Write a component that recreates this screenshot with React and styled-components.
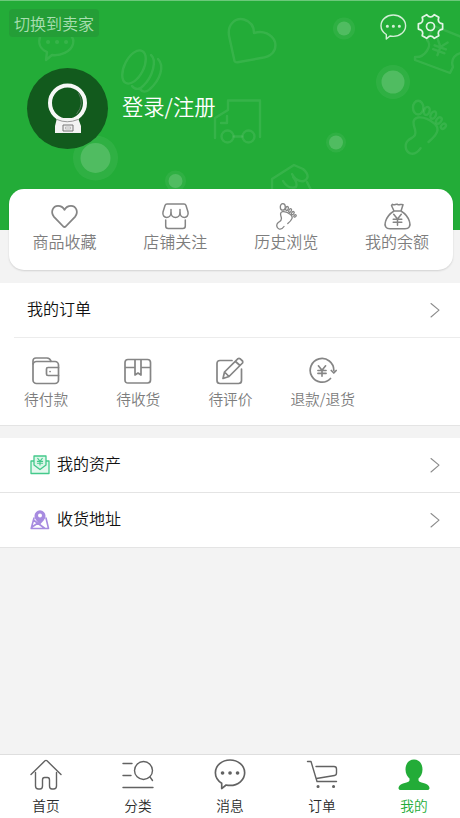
import styled, { createGlobalStyle } from "styled-components";

const GlobalStyle = createGlobalStyle`
  * {
    box-sizing: border-box;
  }

  body {
    margin: 0;
    background: #f3f3f3;
    font-family: "Noto Sans CJK SC", "Noto Sans", sans-serif;
    font-weight: 350;
  }
`;

const Page = styled.div`
  display: flex;
  flex-direction: column;
  height: 818px;
  overflow: hidden;
  background: #f3f3f3;
`;

const Header = styled.header`
  position: relative;
  flex: none;
  height: 230px;
  background: #23ac38;
  border-top: 1px solid #6cc87a;
`;

const Pattern = styled.svg`
  position: absolute;
  left: 0;
  top: -1px;
  fill: none;
  stroke: rgba(255, 255, 255, 0.09);
  stroke-width: 2.4;
  stroke-linecap: round;
  stroke-linejoin: round;
`;

const HeaderContent = styled.div`
  position: relative;
`;

const TopBar = styled.div`
  display: flex;
  justify-content: space-between;
  height: 39px;
  padding: 8px 16px 0 9px;
`;

const SwitchButton = styled.button`
  width: 90px;
  height: 28px;
  padding: 0 0 1px;
  border: 0;
  border-radius: 4px;
  background: #249e37;
  color: #a9dfb1;
  font: 350 16px/28px "Noto Sans CJK SC", sans-serif;
  text-align: center;
`;

const TopIcons = styled.div`
  display: flex;
  gap: 10px;
  padding-top: 4px;
`;

const Icon = styled.svg`
  display: block;
  flex: none;
  fill: none;
  stroke: ${(p) => p.$color || "#858585"};
  stroke-width: ${(p) => p.$line || 1.5};
  stroke-linecap: round;
  stroke-linejoin: round;
`;

const Profile = styled.div`
  display: flex;
  align-items: center;
  gap: 14px;
  padding: 28px 0 0 27px;
`;

const Avatar = styled.div`
  width: 81px;
  height: 81px;
  border-radius: 50%;
  background: #125a1d;
`;

const LoginText = styled.span`
  padding-bottom: 5px;
  color: #fff;
  font-size: 21.3px;
  line-height: 30px;
`;

const ShortcutCard = styled.section`
  position: relative;
  display: grid;
  grid-template-columns: repeat(4, 1fr);
  flex: none;
  height: 81px;
  margin: -41px 7.5px 0 9px;
  padding-top: 12px;
  border-radius: 15px;
  background: #fff;
  box-shadow: 0 1px 2px rgba(0, 0, 0, 0.14);

  svg {
    margin-bottom: -1px;
  }
`;

const Entry = styled.div`
  display: flex;
  flex-direction: column;
  align-items: center;
  color: #7d7d7d;
  font-size: ${(p) => p.$size || 16}px;
  line-height: 24px;
`;

const Panel = styled.section`
  flex: none;
  margin-top: ${(p) => p.$gap}px;
  background: #fff;
  border-bottom: 1px solid #e4e4e4;
`;

const Row = styled.div`
  display: flex;
  align-items: center;
  height: ${(p) => p.$height}px;
  padding: 0 20px 0 ${(p) => p.$left}px;
  color: #111;
  font-size: 16px;
  line-height: 24px;

  & + & {
    border-top: 1px solid #e4e4e4;
  }
`;

const RowTitle = styled.span`
  flex: 1;
  padding: 0 0 4px ${(p) => (p.$icon ? 7 : 0)}px;
`;

const Divider = styled.div`
  height: 1px;
  margin-left: 14px;
  background: #ececec;
`;

const OrderGrid = styled.div`
  display: grid;
  grid-template-columns: repeat(5, 92.2px);
  height: 87px;
  padding-top: 19px;

  svg {
    margin-bottom: -1px;
  }
`;

const TabBar = styled.nav`
  display: grid;
  grid-template-columns: repeat(5, 1fr);
  flex: none;
  height: 64px;
  margin-top: auto;
  padding-top: 3px;
  background: #fff;
  border-top: 1px solid #dedede;
`;

const TabItem = styled.div`
  display: flex;
  flex-direction: column;
  align-items: center;
  color: ${(p) => (p.$active ? "#23ac38" : "#2b2b2b")};
  font-size: 13.7px;
  line-height: 20px;

  svg {
    margin-bottom: 3px;
  }
`;

const FootShape = () => (
  <>
    <ellipse cx="7.8" cy="4.4" rx="2.5" ry="3.3" />
    <ellipse cx="12" cy="6" rx="1.3" ry="2" transform="rotate(20 12 6)" />
    <ellipse cx="15.1" cy="8" rx="1.2" ry="1.9" transform="rotate(30 15.1 8)" />
    <ellipse cx="17.8" cy="10.6" rx="1.1" ry="1.7" transform="rotate(40 17.8 10.6)" />
    <ellipse cx="20" cy="13.4" rx="1" ry="1.4" transform="rotate(45 20 13.4)" />
    <path d="M12.800 21C17 17.500 18.700 14.500 15.500 12C12.500 9.500 10 8.800 7.500 9.200C4.500 10 5.700 13 6.300 15C7.200 18.500 5 18.600 3 20.200C1 22 1.500 25.500 4 26.500C6.500 27.300 8 25.500 9 24" />
  </>
);

const StoreShape = () => (
  <>
    <path d="M5 1.500H22Q23.500 1.500 24 3L26 9.500C26.800 13 24.500 15 22.500 15C20 15 18.300 13 18 10.500C17.700 13 16 15 13.500 15C11 15 9.300 13 9 10.500C8.700 13 7 15 4.500 15C2.500 15 .2 13 1 9.500L3 3Q3.500 1.500 5 1.500Z" />
    <path d="M9 7V10.500M18 7V10.500M3.700 17.500V23.500Q3.700 26 6.200 26H20.800Q23.300 26 23.300 23.500V17.500" />
  </>
);

const Yen = ({ x, y, size = 1, line }) => (
  <path
    transform={`translate(${x} ${y}) scale(${size})`}
    strokeWidth={line}
    d="M-3.800 -5.500L0 -.8L3.800 -5.500M0 -.8V5.500M-4.300 -.5H4.300M-4.300 2.500H4.300"
  />
);

const HeaderPattern = () => (
  <Pattern width="460" height="230" viewBox="0 0 460 230">
    <path d="M47 52C40 49 38 43 40 37C44 30 52 29 58 30C68 31 75 37 73 44C71 52 60 56 52 55L46 60Z" />
    <path d="M48 42h.1M57 42h.1M66 42h.1" strokeWidth="4" />
    <ellipse cx="134" cy="67" rx="9.500" ry="18" transform="rotate(27 134 67)" />
    <path d="M151 55C157 60 153 76 144 85C140 90 135 90 132 86M158 59C165 66 160 80 150 89C146 93 142 92 140 89" />
    <path d="M234.500 61L229.500 38C226 24 236 17.500 244 19.500C252 22 254 27 254 33C263 30 272 34 275 42C277 51 271 57 261 58L239 62Q235.500 63 234.500 61Z" />
    <path d="M215 138V118L228 110V100.500H260V137M227 116V123H221" />
    <circle cx="227.500" cy="136.500" r="6" />
    <circle cx="248.500" cy="136.500" r="6" />
    <path d="M234 136.500H242" />
    <path d="M272 190V179L294 165L303 169C310 175 308 179 304 181C298 182 294 178 292 174M283 181C286 186 290 189 296 187Q298 183 293 177M307 182L311 190" />
    <path d="M434 26L427 40C433 45 425 58 415 57V60L450 73L453 67C450 59 456 53 462 53M434 26L464 38" />
    <g transform="rotate(20 440 48)">
      <Yen x="440" y="48" size="1.400" line="1.700" />
    </g>
    <g transform="translate(402 98.500) scale(2.070)" strokeWidth="1.150">
      <FootShape />
    </g>
    <g stroke="none" fill="#fff">
      {[
        [344, 28.5, 7, 11],
        [393, 82, 11.5, 17],
        [336, 142.5, 7, 10],
        [95.5, 158, 15, 22.5],
        [175.5, 181, 7, 10.5],
      ].map(([x, y, inner, outer]) => (
        <g key={x}>
          <circle cx={x} cy={y} r={outer} opacity=".06" />
          <circle cx={x} cy={y} r={inner} opacity=".16" />
        </g>
      ))}
    </g>
  </Pattern>
);

const ChatShape = () => (
  <path d="M6.300 20.500C2.800 18.300 1 15.200 1 11.700C1 5.700 6.500 1 13.300 1S25.600 5.700 25.600 11.700S20.100 22.400 13.300 22.400Q11.500 22.400 10 22L6.300 25Z" />
);

const HeaderChatIcon = () => (
  <Icon width="27" height="27" viewBox="0 -1 27 27" $color="#d3efd7" $line={1.4}>
    <ChatShape />
    <path d="M7.300 12.200h.1M13.300 12.200h.1M19.300 12.200h.1" strokeWidth="3" />
  </Icon>
);

// one tooth and the valley after it, repeated every 60 degrees
const gearPoints = [0, 60, 120, 180, 240, 300].flatMap((base) =>
  [
    [-19, 10.3],
    [-12, 12.4],
    [12, 12.4],
    [19, 10.3],
    [30, 9.5],
  ].map(([angle, radius]) => {
    const a = ((base + angle) * Math.PI) / 180;
    return `${13.5 + radius * Math.cos(a)},${13.5 + radius * Math.sin(a)}`;
  })
);

const GearIcon = () => (
  <Icon width="27" height="27" viewBox="0 0 27 27" $color="#e2f5e5" $line={1.7}>
    <polygon points={gearPoints.join(" ")} />
    <circle cx="13.500" cy="13.500" r="4" />
  </Icon>
);

const AvatarImage = () => (
  <svg width="81" height="81" viewBox="0 0 81 81">
    <circle cx="40.500" cy="35" r="17.500" fill="none" stroke="#f6f8f6" strokeWidth="4" />
    <path d="M51.500 25Q58 36 49.500 46" fill="none" stroke="#52775a" strokeWidth="1" />
    <path d="M30 50H51L54 58V65H28V58Z" fill="#f3f3f3" />
    <path d="M30 51.500Q40 56 51 51.500" fill="none" stroke="#999" strokeWidth="1" />
    <path d="M36 57H46V63H36Z" fill="#eee" stroke="#777" />
    <path d="M38.500 59H43.500V61H38.500Z" fill="none" stroke="#aaa" strokeWidth=".7" />
  </svg>
);

const shortcuts = [
  {
    label: "商品收藏",
    icon: (
      <path
        d="M12.300 24L3 14.300C-1 9.500 2 3.300 7 3.300C10.200 3.300 12.300 5 13.500 7.300C14.700 5 16.800 3.300 20 3.300C25 3.300 28 9.500 24 14.300L14.700 24Q13.500 25 12.300 24Z"
        strokeWidth="1.800"
      />
    ),
  },
  { label: "店铺关注", icon: <StoreShape /> },
  {
    label: "历史浏览",
    icon: (
      <g transform="translate(2 0)" strokeWidth="1.300">
        <FootShape />
      </g>
    ),
  },
  {
    label: "我的余额",
    icon: (
      <>
        <path d="M10 8.500L7.500 3L8.500 1.800C10.500 3.300 11.700 1 13.500 1.800C15.300 3.300 17 1 19 2.200L17 8.500C21 11 24 14 25.500 19C27 23.500 25 26.300 21 26.300H6C2 26.300 0 23.500 1.500 19C3 14 6 11 10 8.500H17" />
        <Yen x={13.5} y={17.3} size={1} />
      </>
    ),
  },
];

const orders = [
  {
    label: "待付款",
    icon: (
      <>
        <rect x="1" y="4.500" width="25.500" height="22" rx="3.500" />
        <path d="M1 7V4Q1 1 4 1H15Q18 1 19 4.300M26.500 10.500H16Q14.500 10.500 14.500 12V17Q14.500 18.500 16 18.500H26.500M18 14.500h.1" />
      </>
    ),
  },
  {
    label: "待收货",
    icon: (
      <path d="M4 2.500H23.500Q26.500 2.500 26.500 5.500V23Q26.500 26 23.500 26H4Q1 26 1 23V5.500Q1 2.500 4 2.500ZM1 10.500H11M17 10.500H26.500M11 2.500V18L14 16L17 18V2.500" />
    ),
  },
  {
    label: "待评价",
    icon: (
      <>
        <path d="M16 3.500H4Q1 3.500 1 6.500V23.500Q1 26.500 4 26.500H22.500Q25.500 26.500 25.500 23.500V12" />
        <path d="M7 21.500L8.500 15L22 1.700Q23 1 24 1.700L26.500 4Q27 5 26.500 6L13 19.500ZM19.500 4.500L24 8.500M8.500 15L13 19.500" />
      </>
    ),
  },
  {
    label: "退款/退货",
    icon: (
      <>
        <path d="M21.500 21.500A11.800 11.800 0 1 1 24.800 13.500M22.300 13.500L24.800 16L27.200 13.500" />
        <Yen x={13} y={14} size={0.95} />
      </>
    ),
  },
];

const tabs = [
  {
    label: "首页",
    icon: (
      <path d="M1 16.500L15 2.800Q16 2 17 2.800L31 16.500M5.500 14.500V28Q5.500 31 8.500 31H10Q12.500 31 12.500 28V22Q12.500 19.500 14.500 19.500H17.500Q19.500 19.500 19.500 22V28Q19.500 31 22 31H23.500Q26.500 31 26.500 28V14.500" />
    ),
  },
  {
    label: "分类",
    icon: (
      <>
        <path d="M1 5.500H10M1 17.500H9M1 29.500H31M28 19L30.500 22.500" />
        <circle cx="21.500" cy="12.500" r="9" />
      </>
    ),
  },
  {
    label: "消息",
    icon: (
      <>
        <g transform="translate(.2 .8) scale(1.190)">
          <ChatShape />
        </g>
        <path d="M8.500 15h.1M16 15h.1M23.500 15h.1" strokeWidth="3.600" />
      </>
    ),
  },
  {
    label: "订单",
    icon: (
      <>
        <path d="M1.500 3.500H5L11 23.500H30.500M10 8.500H28Q30.500 8.500 30.500 11V15Q30.500 17.200 28.500 17.500L10.500 20.500" />
        <path d="M12 28.500h.1M27.500 28.500h.1" strokeWidth="3" />
      </>
    ),
  },
  {
    label: "我的",
    active: true,
    icon: (
      <path
        fill="#23ac38"
        stroke="none"
        d="M16 1.500C21 1.500 24.500 5.500 24.500 11.500C24.500 16 22.500 18.500 20.500 20.500V22.500Q21 24 23.500 24.500L27 25.500C30.500 26.500 31.500 28.500 31.500 30.500Q31 32 29.500 32H2.500Q1 32 .5 30.500C.5 28.500 1.500 26.500 5 25.500L8.500 24.500Q11 24 11.500 22.500V20.500C9.500 18.500 7.500 16 7.500 11.500C7.500 5.500 11 1.500 16 1.500Z"
      />
    ),
  },
];

const Chevron = () => (
  <Icon width="10" height="16" viewBox="0 0 10 16" $color="#8b8b8b" $line={1.1}>
    <path d="M1 1.500L9 8.200L1 15" />
  </Icon>
);

const AssetIcon = () => (
  <Icon width="20" height="20" viewBox="0 0 20 20" $color="#43c98b" $line={1.3}>
    <path d="M4 6H1V18.500H19V6H16" fill="#e4f8ee" />
    <path d="M4 1H16V10L10 14.500L4 10Z" fill="#dcf6e9" />
    <Yen x={10} y={6.7} size={0.6} line={1.8} />
  </Icon>
);

const AddressIcon = () => (
  <Icon width="20" height="20" viewBox="0 0 20 20" $color="#a78be0" $line={1.6}>
    <path d="M4 8L1.200 18.500H18.500L16 8M4 10.500L15 18.500M2 17L8 13" />
    <path d="M10 14.500C6 10.500 4.500 8.500 4.500 5.800A5.500 5.500 0 0 1 15.500 5.800C15.500 8.500 14 10.500 10 14.500Z" fill="#a78be0" stroke="none" />
    <circle cx="10" cy="5.500" r="2" fill="#fff" stroke="none" />
  </Icon>
);

export default function App() {
  return (
    <Page>
      <GlobalStyle />
      <Header>
        <HeaderPattern />
        <HeaderContent>
          <TopBar>
            <SwitchButton>切换到卖家</SwitchButton>
            <TopIcons>
              <HeaderChatIcon />
              <GearIcon />
            </TopIcons>
          </TopBar>
          <Profile>
            <Avatar>
              <AvatarImage />
            </Avatar>
            <LoginText>登录/注册</LoginText>
          </Profile>
        </HeaderContent>
      </Header>

      <ShortcutCard>
        {shortcuts.map((item) => (
          <Entry key={item.label}>
            <Icon width="29" height="29" viewBox="-1 -1.500 29 29">
              {item.icon}
            </Icon>
            {item.label}
          </Entry>
        ))}
      </ShortcutCard>

      <Panel $gap={13}>
        <Row $height={54} $left={27}>
          <RowTitle>我的订单</RowTitle>
          <Chevron />
        </Row>
        <Divider />
        <OrderGrid>
          {orders.map((item) => (
            <Entry key={item.label} $size={14.7}>
              <Icon width="28" height="31" viewBox="0 0 28 31" $line={1.7}>
                {item.icon}
              </Icon>
              {item.label}
            </Entry>
          ))}
        </OrderGrid>
      </Panel>

      <Panel $gap={12}>
        <Row $height={54} $left={30}>
          <AssetIcon />
          <RowTitle $icon>我的资产</RowTitle>
          <Chevron />
        </Row>
        <Row $height={55} $left={30}>
          <AddressIcon />
          <RowTitle $icon>收货地址</RowTitle>
          <Chevron />
        </Row>
      </Panel>

      <TabBar>
        {tabs.map((tab) => (
          <TabItem key={tab.label} $active={tab.active}>
            <Icon width="32" height="34" viewBox="0 0 32 34" $color="#626262" $line={1.4}>
              {tab.icon}
            </Icon>
            {tab.label}
          </TabItem>
        ))}
      </TabBar>
    </Page>
  );
}
